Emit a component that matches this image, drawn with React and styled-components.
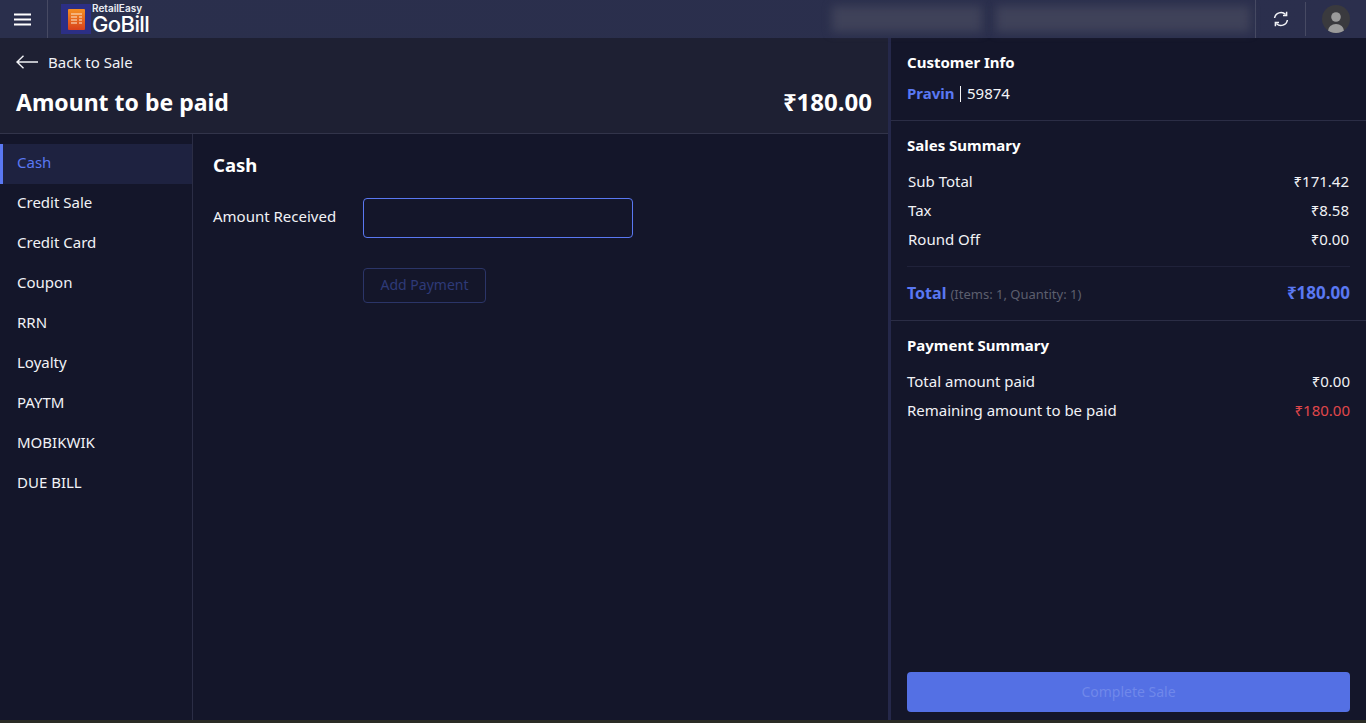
import styled, { createGlobalStyle } from 'styled-components';

const GlobalStyle = createGlobalStyle`
  html, body { margin: 0; padding: 0; height: 100%; background: #14162a; }
  #root { height: 100%; }
  * { box-sizing: border-box; }
  body { font-family: "Noto Sans", "Open Sans", sans-serif; color: #f4f5f8; overflow: hidden; }
`;

const Page = styled.div`
  width: 1366px;
  height: 723px;
  display: flex;
  flex-direction: column;
  background: #2a2b25;
`;

const TopBar = styled.header`
  height: 38px;
  flex: none;
  display: flex;
  align-items: stretch;
  background: linear-gradient(90deg, #2a2f4c 0%, #2b2f4d 100%);
`;

const MenuButton = styled.div`
  width: 48px;
  border-right: 1px solid #474a63;
  display: flex;
  align-items: center;
  padding-left: 14px;
`;

const Brand = styled.div`
  display: flex;
  margin: 4px 0 0 13px;
  gap: 1px;
`;

const LogoSquare = styled.div`
  width: 30px;
  height: 30px;
  background: #2c2f85;
  display: flex;
  align-items: center;
  justify-content: center;
`;

const BrandText = styled.div`
  display: flex;
  flex-direction: column;
  margin-top: -1px;
`;

const BrandSmall = styled.span`
  font-family: "Inter", sans-serif;
  font-size: 10px;
  font-weight: 600;
  line-height: 10px;
  color: #eceef5;
`;

const BrandBig = styled.span`
  font-family: "Inter", sans-serif;
  font-size: 22px;
  font-weight: 500;
  line-height: 22px;
  letter-spacing: -0.6px;
  color: #ffffff;
`;

const BlurStrip = styled.div`
  flex: 1;
  display: flex;
  justify-content: flex-end;
  gap: 14px;
  padding: 6px 5px 6px 0;
`;

const BlurBlock = styled.div`
  width: ${p => p.$w}px;
  background: #3f4259;
  filter: blur(5px);
`;

const IconCell = styled.div`
  width: ${p => p.$w}px;
  margin: ${p => (p.$short ? '2px 0' : '0')};
  display: flex;
  align-items: center;
  justify-content: center;
  border-left: 1px solid #474a63;
`;

const Avatar = styled.div`
  width: 28px;
  height: 28px;
  border-radius: 50%;
  background: #3a3a3e;
  overflow: hidden;
  display: flex;
`;

const Body = styled.div`
  flex: none;
  height: 682px;
  display: flex;
`;

const Left = styled.main`
  width: 888px;
  display: flex;
  flex-direction: column;
  background: #14162a;
`;

const LeftHeader = styled.div`
  height: 96px;
  flex: none;
  background: #1e2033;
  border-bottom: 1px solid #32344a;
  padding: 14px 16px 0;
`;

const BackRow = styled.div`
  display: flex;
  align-items: center;
  gap: 10px;
  height: 20px;
  font-size: 15px;
  color: #f1f2f6;
`;

const AmountRow = styled.div`
  display: flex;
  justify-content: space-between;
  align-items: center;
  margin-top: 14px;
  height: 32px;
`;

const AmountTitle = styled.h1`
  margin: 0;
  font-size: 23px;
  font-weight: 700;
  color: #fff;
`;

const AmountValue = styled.div`
  font-size: 24px;
  font-weight: 700;
  color: #fff;
  margin-top: -2px;
`;

const Content = styled.div`
  flex: 1;
  display: flex;
  min-height: 0;
`;

const Sidebar = styled.nav`
  width: 193px;
  flex: none;
  border-right: 1px solid #2b2d45;
  padding-top: 10px;
`;

const MethodItem = styled.div`
  height: 40px;
  display: flex;
  align-items: center;
  padding-left: ${p => (p.$active ? '14px' : '17px')};
  padding-bottom: 4px;
  font-size: 15px;
  color: ${p => (p.$active ? '#5a78f2' : '#f1f2f6')};
  background: ${p => (p.$active ? '#1e2240' : 'transparent')};
  border-left: ${p => (p.$active ? '3px solid #5a78f2' : 'none')};
`;

const FormPane = styled.section`
  flex: 1;
  padding: 18px 20px;
`;

const FormTitle = styled.h2`
  margin: 0;
  font-size: 18.5px;
  line-height: 26px;
  font-weight: 700;
  color: #fff;
`;

const FormRow = styled.div`
  display: flex;
  align-items: center;
  margin-top: 20px;
`;

const FormLabel = styled.label`
  width: 150px;
  font-size: 15px;
  color: #f1f2f6;
  margin-top: -4px;
`;

const AmountInput = styled.input`
  width: 270px;
  height: 40px;
  background: transparent;
  border: 1px solid #5a78f2;
  border-radius: 4px;
  outline: none;
  color: #fff;
`;

const AddButton = styled.button`
  display: block;
  margin: 30px 0 0 150px;
  width: 123px;
  height: 35px;
  padding: 0 0 3px;
  background: transparent;
  border: 1px solid #2b3568;
  border-radius: 4px;
  color: #2e3a78;
  font-family: inherit;
  font-size: 14px;
`;

const Right = styled.aside`
  flex: 1;
  display: flex;
  flex-direction: column;
  border-left: 3px solid #25284a;
  background: #14162a;
`;

const Section = styled.div`
  padding: ${p => p.$pad};
  border-bottom: ${p => (p.$line ? '1px solid #2b2d45' : 'none')};
`;

const SectionTitle = styled.div`
  font-size: 15px;
  font-weight: 700;
  line-height: 20px;
  color: #fff;
`;

const CustomerLine = styled.div`
  margin-top: 11px;
  display: flex;
  align-items: center;
  font-size: 15px;
  line-height: 20px;
  color: #f4f5f8;
`;

const Accent = styled.span`
  color: #5a78f2;
  font-weight: 700;
`;

const Separator = styled.span`
  width: 1.5px;
  height: 16px;
  margin: 1px 6px 0 5px;
  background: #f4f5f8;
`;

const SummaryRow = styled.div`
  display: flex;
  justify-content: space-between;
  height: 29px;
  align-items: center;
  font-size: 15px;
  padding: ${p => (p.$inset ? '0 1px' : '0')};
  color: #f1f2f6;
`;

const RedAmount = styled.span`
  color: #e0474a;
`;

const RowList = styled.div`
  margin-top: ${p => p.$top}px;
`;

const TotalRow = styled.div`
  display: flex;
  justify-content: space-between;
  align-items: center;
  border-top: 1px solid #20223a;
  margin-top: 13px;
  height: 54px;
  padding-bottom: 2px;
`;

const TotalLabel = styled.span`
  font-size: 16px;
  font-weight: 700;
  color: #5a78f2;
`;

const TotalNote = styled.span`
  font-size: 13px;
  font-weight: 400;
  color: #5d5f6e;
  margin-left: 4px;
`;

const TotalValue = styled.span`
  font-size: 17px;
  font-weight: 700;
  color: #5a78f2;
`;

const Spacer = styled.div`
  flex: 1;
`;

const CompleteWrap = styled.div`
  padding: 0 16px 8px;
`;

const CompleteButton = styled.button`
  width: 100%;
  height: 40px;
  padding: 0 0 2px;
  background: #5470e4;
  border: none;
  border-radius: 4px;
  color: #7088ea;
  font-family: inherit;
  font-size: 14px;
`;

const methods = ['Cash', 'Credit Sale', 'Credit Card', 'Coupon', 'RRN', 'Loyalty', 'PAYTM', 'MOBIKWIK', 'DUE BILL'];

function LogoIcon() {
  return (
    <svg width="17" height="21" viewBox="0 0 17 21">
      <defs>
        <linearGradient id="rcpt" x1="0" y1="0" x2="0" y2="1">
          <stop offset="0" stopColor="#f59023" />
          <stop offset="1" stopColor="#d8401c" />
        </linearGradient>
      </defs>
      <rect x="0" y="0" width="17" height="21" rx="1" fill="url(#rcpt)" />
      <path d="M3 5h11M3 8h6M11 8h3M3 11h6M11 11h3M3 14h6M11 14h3" stroke="#fde9d2" strokeWidth="1.2" />
    </svg>
  );
}

export default function App() {
  return (
    <Page>
      <GlobalStyle />
      <TopBar>
        <MenuButton>
          <svg width="18" height="13" viewBox="0 0 18 13">
            <path d="M0 1.5h17M0 6.5h17M0 11.5h17" stroke="#fff" strokeWidth="1.8" />
          </svg>
        </MenuButton>
        <Brand>
          <LogoSquare><LogoIcon /></LogoSquare>
          <BrandText>
            <BrandSmall>RetailEasy</BrandSmall>
            <BrandBig>GoBill</BrandBig>
          </BrandText>
        </Brand>
        <BlurStrip>
          <BlurBlock $w={150} />
          <BlurBlock $w={254} />
        </BlurStrip>
        <IconCell $w={50}>
          <svg width="16" height="16" viewBox="0 0 16 16" fill="none" stroke="#f2f3f7" strokeWidth="1.5">
            <path d="M1.6 7A6.4 6.4 0 0 1 12.6 3.6" />
            <path d="M14.4 9A6.4 6.4 0 0 1 3.4 12.4" />
            <path d="M13.6 0.8v3.6H10" />
            <path d="M2.4 15.2v-3.6H6" />
          </svg>
        </IconCell>
        <IconCell $w={61} $short>
          <Avatar>
            <svg width="28" height="28" viewBox="0 0 28 28">
              <circle cx="14" cy="12" r="4.8" fill="#9b9b9b" />
              <ellipse cx="14" cy="26" rx="8" ry="7" fill="#9b9b9b" />
            </svg>
          </Avatar>
        </IconCell>
      </TopBar>
      <Body>
        <Left>
          <LeftHeader>
            <BackRow>
              <svg width="22" height="14" viewBox="0 0 22 14" fill="none" stroke="#f1f2f6" strokeWidth="1.4">
                <path d="M22 7H1M7.5 0.8 1 7l6.5 6.2" />
              </svg>
              Back to Sale
            </BackRow>
            <AmountRow>
              <AmountTitle>Amount to be paid</AmountTitle>
              <AmountValue>₹180.00</AmountValue>
            </AmountRow>
          </LeftHeader>
          <Content>
            <Sidebar>
              {methods.map((m, i) => (
                <MethodItem key={m} $active={i === 0}>{m}</MethodItem>
              ))}
            </Sidebar>
            <FormPane>
              <FormTitle>Cash</FormTitle>
              <FormRow>
                <FormLabel>Amount Received</FormLabel>
                <AmountInput />
              </FormRow>
              <AddButton>Add Payment</AddButton>
            </FormPane>
          </Content>
        </Left>
        <Right>
          <Section $pad="14px 16px 17px" $line>
            <SectionTitle>Customer Info</SectionTitle>
            <CustomerLine><Accent>Pravin</Accent><Separator />59874</CustomerLine>
          </Section>
          <Section $pad="14px 16px 0" $line>
            <SectionTitle>Sales Summary</SectionTitle>
            <RowList $top={11}>
              <SummaryRow $inset><span>Sub Total</span><span>₹171.42</span></SummaryRow>
              <SummaryRow $inset><span>Tax</span><span>₹8.58</span></SummaryRow>
              <SummaryRow $inset><span>Round Off</span><span>₹0.00</span></SummaryRow>
            </RowList>
            <TotalRow>
              <span>
                <TotalLabel>Total</TotalLabel>
                <TotalNote>(Items: 1, Quantity: 1)</TotalNote>
              </span>
              <TotalValue>₹180.00</TotalValue>
            </TotalRow>
          </Section>
          <Section $pad="14px 16px 0">
            <SectionTitle>Payment Summary</SectionTitle>
            <RowList $top={11}>
              <SummaryRow><span>Total amount paid</span><span>₹0.00</span></SummaryRow>
              <SummaryRow><span>Remaining amount to be paid</span><RedAmount>₹180.00</RedAmount></SummaryRow>
            </RowList>
          </Section>
          <Spacer />
          <CompleteWrap>
            <CompleteButton>Complete Sale</CompleteButton>
          </CompleteWrap>
        </Right>
      </Body>
    </Page>
  );
}
